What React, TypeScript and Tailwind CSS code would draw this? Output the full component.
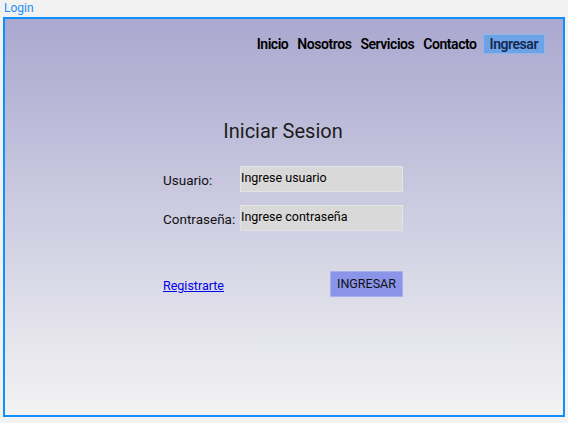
import React from 'react';

const navLinks = ['Inicio', 'Nosotros', 'Servicios', 'Contacto'];

const App: React.FC = () => {
  return (
    <div className="w-[568px] h-[423px] bg-[#f2f2f2] font-['Roboto',sans-serif] overflow-hidden">
      <div className="h-[17px] pl-[4px] text-[12px] leading-[17px] text-[#1b8ef2]">Login</div>
      <div className="ml-[3px] w-[562px] h-[400px] border-2 border-[#0d90fb] bg-gradient-to-b from-[#aaa8cf] to-[#f3f3f3] flex flex-col">
        <nav className="flex justify-end items-center pt-[15px] pr-[18px] font-semibold text-[14px] tracking-[-0.45px] text-black">
          <div className="flex items-center gap-[9px]">
            {navLinks.map((link) => (
              <a key={link} href="#" className="leading-[19px]">
                {link}
              </a>
            ))}
          </div>
          <a href="#" className="ml-[6px] px-[6px] h-[20px] leading-[18px] bg-[#6ea2e6] border border-[#8db6ee] text-[#142a52]">
            Ingresar
          </a>
        </nav>

        <div className="w-[240px] ml-[158px] mt-[64px] flex flex-col">
          <h1 className="text-center text-[20px] leading-[26px] text-[#1c1c1c]">Iniciar Sesion</h1>

          <div className="mt-[22px] flex flex-col gap-[13px] text-[13.5px] text-[#111]">
            <label className="flex items-center">
              <span className="w-[77px] pt-[2px]">Usuario:</span>
              <input
                className="w-[163px] h-[26px] bg-[#d9d9d9] border border-[#e4e4e4] px-[0px] pb-[3px] text-[12.5px] outline-none placeholder:text-black"
                placeholder="Ingrese usuario"
              />
            </label>
            <label className="flex items-center">
              <span className="w-[77px] pt-[2px]">Contraseña:</span>
              <input
                type="password"
                className="w-[163px] h-[26px] bg-[#d9d9d9] border border-[#e4e4e4] px-[0px] pb-[3px] text-[12.5px] outline-none placeholder:text-black"
                placeholder="Ingrese contraseña"
              />
            </label>
          </div>

          <div className="mt-[40px] flex items-center justify-between">
            <a href="#" className="text-[12.5px] text-[#0000ee] underline pt-[5px]">
              Registrarte
            </a>
            <button className="w-[73px] h-[26px] bg-[#8a94e8] border border-[#a9b0ee] text-[12.5px] text-[#111]">
              INGRESAR
            </button>
          </div>
        </div>
      </div>
    </div>
  );
};

export default App;
